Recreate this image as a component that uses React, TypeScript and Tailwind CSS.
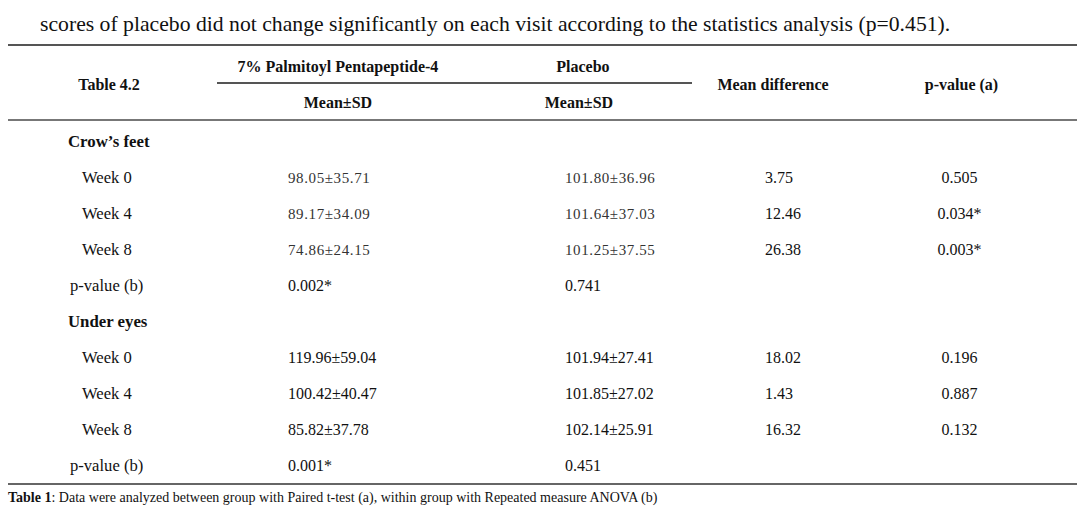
import React from "react";

const serif = { fontFamily: '"Liberation Serif", "Times New Roman", serif' };

type Row = { label: string; kind: "group" | "week" | "p"; a?: string; b?: string; d?: string; p?: string; gray?: boolean };

const rows: Row[] = [
  { label: "Crow\u2019s feet", kind: "group" },
  { label: "Week 0", kind: "week", a: "98.05\u00b135.71", b: "101.80\u00b136.96", d: "3.75", p: "0.505", gray: true },
  { label: "Week 4", kind: "week", a: "89.17\u00b134.09", b: "101.64\u00b137.03", d: "12.46", p: "0.034*", gray: true },
  { label: "Week 8", kind: "week", a: "74.86\u00b124.15", b: "101.25\u00b137.55", d: "26.38", p: "0.003*", gray: true },
  { label: "p-value (b)", kind: "p", a: "0.002*", b: "0.741" },
  { label: "Under eyes", kind: "group" },
  { label: "Week 0", kind: "week", a: "119.96\u00b159.04", b: "101.94\u00b127.41", d: "18.02", p: "0.196" },
  { label: "Week 4", kind: "week", a: "100.42\u00b140.47", b: "101.85\u00b127.02", d: "1.43", p: "0.887" },
  { label: "Week 8", kind: "week", a: "85.82\u00b137.78", b: "102.14\u00b125.91", d: "16.32", p: "0.132" },
  { label: "p-value (b)", kind: "p", a: "0.001*", b: "0.451" },
];

export default function App() {
  return (
    <div className="w-[1080px] h-[516px] bg-white text-[#111] overflow-hidden" style={serif}>
      <div className="pl-[40px] pt-[11px] h-[44px] text-[21.7px] leading-[26px] whitespace-nowrap">
        scores of placebo did not change significantly on each visit according to the statistics analysis (p=0.451).
      </div>
      <div className="mx-[8px] w-[1069px]">
        <div className="h-[2px] bg-[#555]" />
        <div className="flex h-[73px] font-bold text-[16px]">
          <div className="w-[202px] flex items-center justify-center pt-[4px]">Table 4.2</div>
          <div className="w-[482px] flex flex-col">
            <div className="flex h-[36px] items-center pt-[5px]">
              <div className="w-[258px] text-center">7% Palmitoyl Pentapeptide-4</div>
              <div className="w-[228px] text-center pl-[8px]">Placebo</div>
            </div>
            <div className="h-[2px] bg-[#555] ml-[7px]" />
            <div className="flex flex-1 items-center pt-[2px]">
              <div className="w-[258px] text-center">Mean±SD</div>
              <div className="w-[228px] text-center">Mean±SD</div>
            </div>
          </div>
          <div className="w-[162px] flex items-center justify-center pt-[4px]">Mean difference</div>
          <div className="flex-1 flex items-center justify-center pt-[4px] pr-[8px]">p-value (a)</div>
        </div>
        <div className="h-[2px] bg-[#777]" />
        <div className="text-[16px] pt-[2px]">
          {rows.map((r, i) => (
            <div key={i} className="flex h-[36px] items-center pt-[2px]">
              <div
                className={
                  r.kind === "group"
                    ? "w-[280px] pl-[60px] font-bold text-[16.8px]"
                    : r.kind === "week"
                    ? "w-[280px] pl-[74px] text-[16.6px]"
                    : "w-[280px] pl-[62px] text-[16.6px]"
                }
              >
                {r.label}
              </div>
              <div className={r.gray ? "w-[277px] text-[15px] text-[#333] tracking-[0.6px]" : "w-[277px]"}>{r.a}</div>
              <div className={r.gray ? "w-[200px] text-[15px] text-[#333] tracking-[0.6px]" : "w-[200px]"}>{r.b}</div>
              <div className="w-[132px]">{r.d}</div>
              <div className="w-[125px] text-center">{r.p}</div>
            </div>
          ))}
        </div>
        <div className="h-[2px] bg-[#666]" />
        <div className="pt-[5px] text-[14px] leading-[16px] whitespace-nowrap">
          <span className="font-bold">Table 1</span>: Data were analyzed between group with Paired t-test (a), within group with Repeated measure ANOVA (b)
        </div>
      </div>
    </div>
  );
}
